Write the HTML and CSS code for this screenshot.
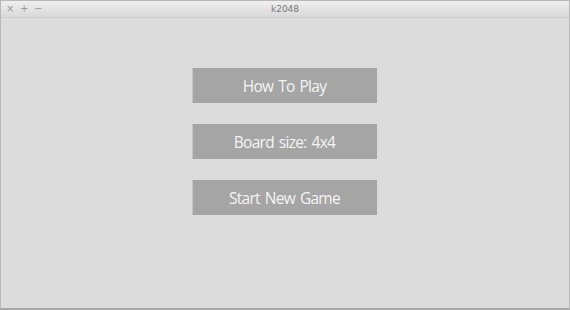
FILE: index.html
```html
<!DOCTYPE html>
<html>
<head>
<meta charset="utf-8">
<title>k2048</title>
<link rel="stylesheet" href="styles.css">
</head>
<body>
<div class="window">
  <div class="titlebar">
    <div class="controls">
      <span class="ctl">×</span>
      <span class="ctl">+</span>
      <span class="ctl">−</span>
    </div>
    <div class="title">k2048</div>
  </div>
  <div class="content">
    <div class="menu">
      <button class="btn">How To Play</button>
      <button class="btn">Board size: 4x4</button>
      <button class="btn">Start New Game</button>
    </div>
  </div>
</div>
</body>
</html>
```
FILE: styles.css
```css
html, body {
  margin: 0;
  padding: 0;
  background: #dcdcdc;
}
.window {
  width: 570px;
  height: 310px;
  box-sizing: border-box;
  border: 1px solid #b8b8b8;
  border-bottom: 2px solid #a8a8a8;
  display: flex;
  flex-direction: column;
  background: #dcdcdc;
  overflow: hidden;
}
.titlebar {
  position: relative;
  height: 16px;
  flex: none;
  background: linear-gradient(#efefef, #d9d9d9);
  border-bottom: 1px solid #cfcfcf;
  font-family: "DejaVu Sans", sans-serif;
}
.controls {
  display: flex;
  gap: 6px;
  padding-left: 5px;
  height: 16px;
  align-items: center;
}
.ctl {
  width: 8px;
  text-align: center;
  font-size: 10px;
  line-height: 16px;
  color: #9a9a9a;
}
.title {
  position: absolute;
  left: 0;
  right: 0;
  top: 0;
  text-align: center;
  font-size: 9px;
  line-height: 16px;
  color: #777;
}
.content {
  flex: 1;
  display: flex;
  justify-content: center;
  padding-top: 50px;
}
.menu {
  display: flex;
  flex-direction: column;
  gap: 21px;
  margin-right: 1px;
}
.btn {
  width: 184px;
  height: 35px;
  margin: 0;
  padding: 0;
  border: none;
  background: #a6a5a5;
  box-shadow: -1px 0 0 #c4c4c4;
  color: #f4f4f4;
  font-family: "Open Sans", "Noto Sans", sans-serif;
  font-size: 15.5px;
  letter-spacing: -0.7px;
  word-spacing: 1.5px;
  line-height: 36px;
}
```
